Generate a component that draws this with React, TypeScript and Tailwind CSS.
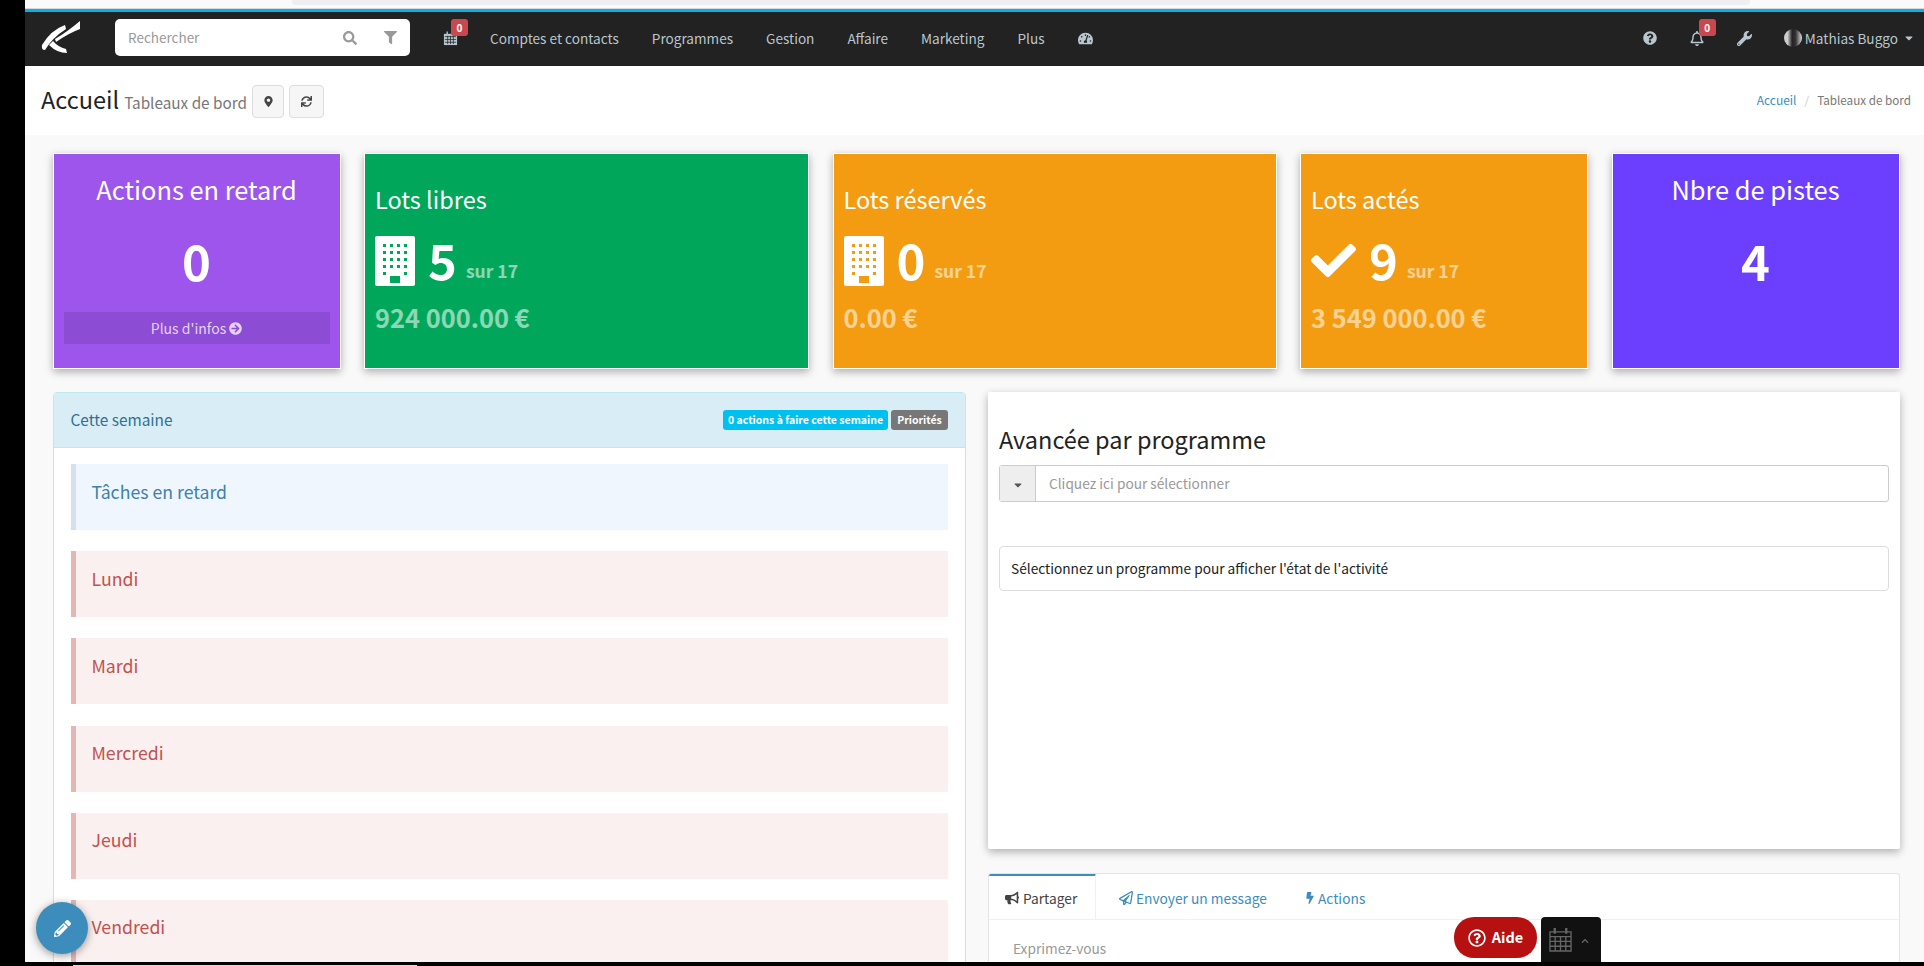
import {
  FaArrowCircleRight,
  FaBolt,
  FaBullhorn,
  FaCaretDown,
  FaCheck,
  FaChevronUp,
  FaFilter,
  FaMapMarkerAlt,
  FaPencilAlt,
  FaQuestionCircle,
  FaRegBell,
  FaRegPaperPlane,
  FaRegQuestionCircle,
  FaSearch,
  FaSync,
  FaTachometerAlt,
  FaWrench,
} from 'react-icons/fa'

const navItems = ['Comptes et contacts', 'Programmes', 'Gestion', 'Affaire', 'Marketing', 'Plus']
const days = ['Lundi', 'Mardi', 'Mercredi', 'Jeudi', 'Vendredi']

function buildingPath() {
  let d = 'M2 0H38a2 2 0 0 1 2 2V48a2 2 0 0 1-2 2H2a2 2 0 0 1-2-2V2a2 2 0 0 1 2-2Z'
  const hole = (x: number, y: number, w: number, h: number) => `M${x} ${y}h${w}v${h}h-${w}Z`
  for (let r = 0; r < 4; r++) {
    for (let c = 0; c < 4; c++) d += hole(8 + c * 7, 8 + r * 7, 3, 3)
  }
  d += hole(8, 36, 3, 3) + hole(29, 36, 3, 3) + hole(15, 40, 10, 7)
  return d
}

function BuildingIcon() {
  return (
    <svg viewBox="0 0 40 50" className="w-[40px] h-[50px] shrink-0">
      <path d={buildingPath()} fill="white" fillRule="evenodd" />
    </svg>
  )
}

function Badge() {
  return (
    <span className="absolute -top-[12px] left-[9px] w-[17px] h-[17px] rounded-[3px] bg-[#c9484e] text-white text-[10px] leading-[17px] font-bold text-center">
      0
    </span>
  )
}

function CenterCard({ title, value, color, more }: { title: string; value: string; color: string; more?: boolean }) {
  return (
    <div className={`w-[288px] h-[216px] border border-white shadow-[0_3px_8px_rgba(0,0,0,0.3)] flex flex-col items-center text-white ${color}`}>
      <div className="mt-[17px] text-[25.4px] leading-[36px]">{title}</div>
      <div className="mt-[23px] text-[49px] leading-[60px] font-bold">{value}</div>
      {more && (
        <div className="mt-[22px] w-[266px] h-[32px] bg-black/10 text-[#e6d0f8] text-[14px] leading-[32px] flex items-center justify-center gap-[3px]">
          Plus d'infos <FaArrowCircleRight className="text-[13px]" />
        </div>
      )}
    </div>
  )
}

function LotCard({ title, value, amount, color, width, icon }: { title: string; value: string; amount: string; color: string; width: string; icon: React.ReactNode }) {
  return (
    <div className={`h-[216px] border border-white shadow-[0_3px_8px_rgba(0,0,0,0.3)] pl-[10px] text-white ${color} ${width}`}>
      <div className="mt-[27px] text-[23.5px] leading-[36px]">{title}</div>
      <div className="mt-[18px] h-[51px] flex items-center gap-[13px]">
        {icon}
        <div className="-mt-[3px] -mr-[4px] text-[49px] leading-[50px] font-bold">{value}</div>
        <div className="self-end mb-[3px] text-[17.5px] leading-[24px] font-bold text-white/55">sur 17</div>
      </div>
      <div className="mt-[13px] text-[25.4px] leading-[36px] font-bold text-white/55">{amount}</div>
    </div>
  )
}

function DayAlert({ label, blue }: { label: string; blue?: boolean }) {
  return (
    <div
      className={
        blue
          ? 'shrink-0 h-[66px] border-l-[5px] border-[#d2e0f2] bg-[#eff6fe] pl-[16px] pt-[13px] text-[17.7px] leading-[28px] text-[#3c82ab]'
          : 'shrink-0 h-[66px] border-l-[5px] border-[#e4b7b7] bg-[#faf0ef] pl-[16px] pt-[12.5px] text-[17.7px] leading-[28px] text-[#c4504e]'
      }
    >
      {label}
    </div>
  )
}

export default function App() {
  return (
    <div className="relative w-[1924px] h-[966px] overflow-hidden bg-black flex flex-col font-['Noto_Sans_CJK_SC',sans-serif]">
      <div className="h-[962px] flex shrink-0">
        <div className="w-[25px] shrink-0" />
        <div className="flex-1 min-w-0 flex flex-col bg-[#f9f9f9] overflow-hidden">
          {/* browser strip */}
          <div className="h-[9px] shrink-0 bg-[#fafafa] border-b border-[#d8d8d8]">
            <div className="ml-[267px] w-[1458px] h-[5px] bg-[#efeff1] rounded-b-[4px]" />
          </div>
          <div className="h-[3px] shrink-0 bg-[#00b4ee]" />

          {/* navbar */}
          <nav className="h-[54px] shrink-0 bg-[#222222] flex items-center text-[13.6px] leading-[20px] text-[#b8c7ce]">
            <div className="w-[90px] h-full shrink-0">
              <svg viewBox="0 0 80 54" className="w-[80px] h-[54px]">
                <path d="M40 13Q26 18 17 33Q16 38 20 38Q27 26 41 17Z" fill="white" />
                <path d="M30 27Q42 20 55 9L55 17Q44 21 31 30Z" fill="white" />
                <path d="M28 29Q33 35 41 37L42 41Q32 41 24 33Z" fill="white" />
              </svg>
            </div>
            <div className="w-[295px] h-[37px] mb-[3px] shrink-0 bg-white rounded-[5px] flex items-center pl-[13px] pr-[13px] text-[13.5px] text-[#999]">
              <span className="flex-1 -mt-[2px]">Rechercher</span>
              <FaSearch className="text-[14px] text-[#999] mr-[27px]" />
              <FaFilter className="text-[13px] text-[#999]" />
            </div>
            <div className="relative ml-[32px] mr-[31px] mb-[2px] w-[17px] flex justify-center">
              <svg viewBox="0 0 16 16" className="w-[15px] h-[15px] text-[#b8c7ce]">
                <path d="M1 3h14v12H1Z" fill="currentColor" />
                <path d="M2 6h12M2 9h12M2 12h12M5 5v9M8 5v9M11 5v9" stroke="#222" strokeWidth="0.8" />
                <path d="M4.5 0.5v3M11.5 0.5v3" stroke="currentColor" strokeWidth="1.4" />
              </svg>
              <Badge />
            </div>
            <div className="mb-[2px] flex items-center gap-[33px]">
              {navItems.map((item) => (
                <span key={item}>{item}</span>
              ))}
              <FaTachometerAlt className="text-[15px]" />
            </div>
            <div className="ml-auto mb-[2px] flex items-center pr-[9px]">
              <FaQuestionCircle className="text-[14px]" />
              <div className="relative ml-[33px] w-[14px] flex justify-center">
                <FaRegBell className="text-[15px]" />
                <Badge />
              </div>
              <FaWrench className="ml-[33px] text-[15px]" />
              <div className="ml-[32px] w-[18px] h-[18px] rounded-full bg-[linear-gradient(90deg,#ccc_0%,#ccc_20%,#222_45%,#333_65%,#ddd_100%)]" />
              <span className="ml-[3px]">Mathias Buggo</span>
              <FaCaretDown className="ml-[5px] text-[12px]" />
            </div>
          </nav>

          {/* page header */}
          <header className="h-[69px] shrink-0 bg-white flex items-center pl-[16px] pr-[13px]">
            <span className="-mt-[3px] text-[23.5px] leading-[34px] text-[#222]">Accueil</span>
            <span className="ml-[5px] mt-[3px] text-[15.3px] leading-[24px] text-[#777]">Tableaux de bord</span>
            <div className="ml-[5px] mt-[1px] w-[32px] h-[33px] rounded-[4px] border border-[#ddd] bg-[#f6f6f6] flex items-center justify-center text-[#444]">
              <FaMapMarkerAlt className="text-[11px]" />
            </div>
            <div className="ml-[5px] mt-[1px] w-[35px] h-[33px] rounded-[4px] border border-[#ddd] bg-[#f6f6f6] flex items-center justify-center text-[#444]">
              <FaSync className="text-[11px]" />
            </div>
            <div className="ml-auto mt-[-2px] flex items-center text-[11.7px] leading-[20px] text-[#777]">
              <span className="text-[12px] text-[#3c8dbc]">Accueil</span>
              <span className="mx-[8px] text-[#ccc]">/</span>
              <span>Tableaux de bord</span>
            </div>
          </header>

          {/* content */}
          <main className="flex-1 min-h-0 pt-[18px] pl-[27.5px] pr-[24px] flex flex-col gap-[23px]">
            <div className="flex gap-[23.5px] shrink-0">
              <CenterCard title="Actions en retard" value="0" color="bg-[#9d55ec]" more />
              <LotCard title="Lots libres" value="5" amount="924 000.00 €" color="bg-[#00a65a]" width="w-[445px]" icon={<BuildingIcon />} />
              <LotCard title="Lots réservés" value="0" amount="0.00 €" color="bg-[#f39c12]" width="w-[444px]" icon={<BuildingIcon />} />
              <LotCard title="Lots actés" value="9" amount="3 549 000.00 €" color="bg-[#f39c12]" width="w-[288px]" icon={<FaCheck className="text-[45px] shrink-0" />} />
              <CenterCard title="Nbre de pistes" value="4" color="bg-[#6c3fff]" />
            </div>

            <div className="flex-1 min-h-0 flex gap-[22px]">
              {/* week panel */}
              <section className="w-[913.5px] shrink-0 h-[600px] rounded-t-[4px] border border-[#bce8f1] bg-white">
                <div className="h-[55px] bg-[#d9edf7] border-b border-[#bce8f1] rounded-t-[3px] flex items-center pl-[17px] pr-[17px] text-[#31708f]">
                  <span className="flex-1 -mt-[2px] text-[15.4px] leading-[22px]">Cette semaine</span>
                  <span className="h-[20px] w-[165px] rounded-[3px] bg-[#00c0ef] text-white text-[10.5px] leading-[20px] font-bold text-center">
                    0 actions à faire cette semaine
                  </span>
                  <span className="ml-[3px] h-[20px] w-[57px] rounded-[3px] bg-[#777] text-white text-[10.5px] leading-[20px] font-bold text-center">
                    Priorités
                  </span>
                </div>
                <div className="pt-[16px] px-[17px] flex flex-col gap-[21.2px]">
                  <DayAlert label="Tâches en retard" blue />
                  {days.map((d) => (
                    <DayAlert key={d} label={d} />
                  ))}
                </div>
              </section>

              <div className="flex-1 min-w-0 flex flex-col gap-[24px]">
                {/* progress panel */}
                <section className="h-[457px] shrink-0 bg-white rounded-[2px] shadow-[0_3px_8px_rgba(0,0,0,0.3)] px-[11px] pt-[30px]">
                  <h3 className="text-[23.5px] leading-[34px] text-[#222]">Avancée par programme</h3>
                  <div className="mt-[9px] h-[37px] flex border border-[#ccc] rounded-[3px]">
                    <div className="w-[36px] shrink-0 bg-[#eeeeee] border-r border-[#ccc] flex items-center justify-center text-[#555]">
                      <FaCaretDown className="text-[12px] mt-[3px]" />
                    </div>
                    <div className="pl-[13px] text-[13.7px] leading-[35px] text-[#999]">Cliquez ici pour sélectionner</div>
                  </div>
                  <div className="mt-[44px] h-[45px] border border-[#ddd] rounded-[4px] pl-[11px] text-[13.7px] leading-[43px] text-[#222]">
                    Sélectionnez un programme pour afficher l'état de l'activité
                  </div>
                </section>

                {/* share panel */}
                <section className="flex-1 min-h-0 bg-white border-x border-t border-[#e4e4e4] rounded-t-[3px] overflow-hidden">
                  <div className="h-[46px] flex items-stretch border-b border-[#f0f0f0] text-[13.75px] leading-[20px] text-[#3c8dbc]">
                    <div className="w-[107px] -mt-px pt-[1px] border-t-[3px] border-[#3c8dbc] border-r border-r-[#f0f0f0] flex items-center pl-[16px] gap-[4px] text-[#444]">
                      <FaBullhorn className="text-[14px]" /> Partager
                    </div>
                    <div className="ml-[23px] pt-[2px] flex items-center gap-[3px]">
                      <FaRegPaperPlane className="text-[14px]" /> Envoyer un message
                    </div>
                    <div className="ml-[37px] pt-[2px] flex items-center gap-[2px]">
                      <FaBolt className="text-[12px]" /> Actions
                    </div>
                  </div>
                  <div className="pl-[24px] pt-[18px] text-[13.7px] leading-[20px] text-[#999]">Exprimez-vous</div>
                </section>
              </div>
            </div>
          </main>
        </div>
      </div>

      {/* bottom edge */}
      <div className="h-[4px] shrink-0 flex items-end">
        <div className="ml-[73px] w-[344px] h-px bg-[#ddd]" />
      </div>

      {/* floating controls */}
      <button className="absolute left-[36px] top-[902px] w-[52px] h-[52px] rounded-full bg-[#3c8dbc] shadow-[0_2px_8px_rgba(0,0,0,0.4)] flex items-center justify-center text-white">
        <FaPencilAlt className="text-[17px]" />
      </button>
      <div className="absolute left-[1454px] top-[917px] w-[83px] h-[41px] rounded-[20px] bg-[#b71010] flex items-center justify-center gap-[6px] text-white text-[14.5px] leading-[20px] font-bold">
        <FaRegQuestionCircle className="text-[18px]" /> <span className="-mt-[2px]">Aide</span>
      </div>
      <div className="absolute left-[1541px] top-[917px] w-[60px] h-[45px] rounded-t-[4px] bg-[#111] flex items-center pl-[8px] gap-[9px] text-[#666]">
        <svg viewBox="0 0 24 26" className="w-[23px] h-[25px]" fill="none" stroke="currentColor" strokeWidth="1.4">
          <path d="M1 5h22v20H1ZM1 10h22M1 15h22M1 20h22M6.5 10v15M12 10v15M17.5 10v15" />
          <path d="M6 1v6M18 1v6" strokeWidth="2.4" />
        </svg>
        <FaChevronUp className="text-[8px] mt-[3px]" />
      </div>
    </div>
  )
}
